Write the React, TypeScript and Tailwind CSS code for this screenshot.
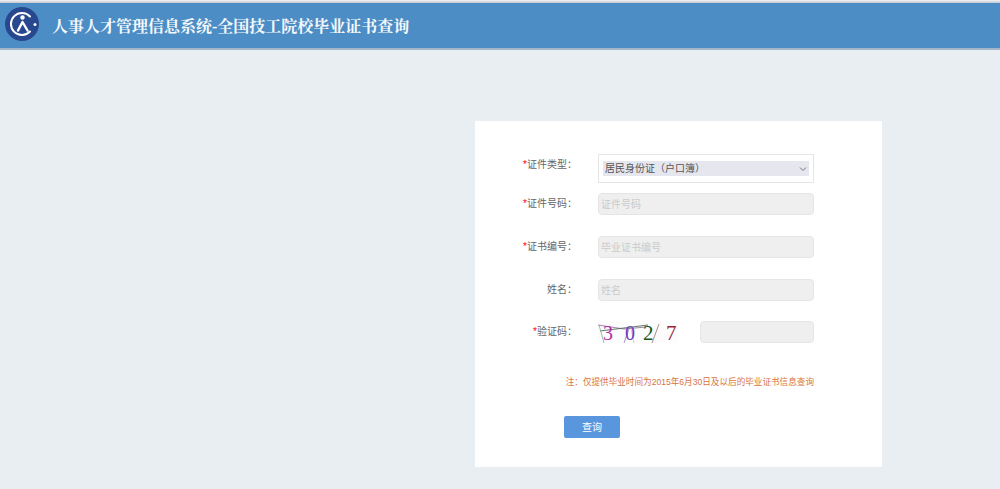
const fontCn = "font-['Liberation_Sans','Noto_Sans_CJK_SC',sans-serif]";

function Logo() {
  return (
    <svg width="34" height="34" viewBox="0 0 34 34" className="mt-[4px] shrink-0 self-start">
      <circle cx="17" cy="17" r="17" fill="#27488f" />
      <path d="M25 9.5A11 11 0 1 0 25 24.5" fill="none" stroke="#fff" strokeWidth="2" strokeLinecap="round" />
      <circle cx="17.5" cy="10.5" r="2.2" fill="#fff" />
      <path d="M17.5 15L13 23.5M17.5 15L22.5 23.5" fill="none" stroke="#fff" strokeWidth="2.4" strokeLinecap="round" />
      <circle cx="30" cy="17.5" r="1.5" fill="#fff" />
    </svg>
  );
}

function Captcha() {
  return (
    <svg width="80" height="22" viewBox="0 0 80 22" className="shrink-0 bg-[#fbfcfb]">
      <path d="M0 4L26 8L48 6" fill="none" stroke="#8a6a9a" strokeWidth="0.8" />
      <path d="M2 10L50 4" stroke="#4c6a55" strokeWidth="0.9" />
      <path d="M1 4L6 22" stroke="#7fb09a" strokeWidth="0.8" />
      <path d="M26 22L32 5" stroke="#9a78b5" strokeWidth="0.8" />
      <path d="M33 8L36 22" stroke="#d8c79a" strokeWidth="0.8" />
      <path d="M54 22L61 3" stroke="#a08080" strokeWidth="0.9" />
      <text x="5" y="19" fontFamily="Liberation Serif, serif" fontSize="20" fill="#b52ba8">3</text>
      <text x="27" y="19" fontFamily="Liberation Serif, serif" fontSize="20" fill="#6d3bc4">0</text>
      <text x="45" y="19" fontFamily="Liberation Serif, serif" fontSize="21" fill="#14571f">2</text>
      <text x="68" y="19" fontFamily="Liberation Serif, serif" fontSize="21" fill="#9c1f3d">7</text>
    </svg>
  );
}

function FieldLabel({ text, required, lifted }: { text: string; required?: boolean; lifted?: boolean }) {
  return (
    <label className={`w-[102px] shrink-0 text-right text-[10px] leading-[14px] text-[#666] ${lifted ? "mb-[7px]" : ""}`}>
      {required && <span className="text-[#f00]">*</span>}
      {text}：
    </label>
  );
}

function TextField({ placeholder, width = "w-[216px]" }: { placeholder?: string; width?: string }) {
  return (
    <input
      readOnly
      placeholder={placeholder}
      className={`${width} h-[22px] rounded-[4px] border border-[#e5e5e5] bg-[#efefef] px-[2px] text-[10px] outline-none placeholder:text-[#cbcbcb]`}
    />
  );
}

export default function App() {
  return (
    <div className={`${fontCn} h-[489px] w-[1000px] overflow-hidden bg-[#e9eef3]`}>
      <div className="h-[3px] bg-gradient-to-b from-[#f2f4f6] to-[#c3c8cd]" />
      <header className="flex h-[47px] items-center gap-[13px] border-b-2 border-[#a4b7ca] bg-[#4c8dc5] pl-[5px]">
        <Logo />
        <h1 className="mt-[2px] font-['Liberation_Serif','Noto_Serif_CJK_SC','Noto_Sans_CJK_SC',serif] text-[16px] font-bold text-[#f4f8fb]">
          人事人才管理信息系统-全国技工院校毕业证书查询
        </h1>
      </header>

      <main className="pl-[475px] pt-[71px]">
        <form className="flex h-[346px] w-[407px] flex-col bg-white pt-[33px]">
          <div className="flex items-center gap-[21px]">
            <FieldLabel text="证件类型" required lifted />
            <div className="flex h-[29px] w-[216px] items-center border border-[#e5e5e5] px-[4px]">
              <div className="flex h-[15px] w-full items-center justify-between bg-[#e6e6ee] px-[2px] text-[10px] text-[#555]">
                <span>居民身份证（户口簿）</span>
                <svg width="8" height="6" viewBox="0 0 8 6">
                  <path d="M1 1.5L4 4.5L7 1.5" fill="none" stroke="#777" strokeWidth="1" />
                </svg>
              </div>
            </div>
          </div>

          <div className="mt-[10px] flex items-center gap-[21px]">
            <FieldLabel text="证件号码" required />
            <TextField placeholder="证件号码" />
          </div>

          <div className="mt-[21px] flex items-center gap-[21px]">
            <FieldLabel text="证书编号" required />
            <TextField placeholder="毕业证书编号" />
          </div>

          <div className="mt-[21px] flex items-center gap-[21px]">
            <FieldLabel text="姓名" />
            <TextField placeholder="姓名" />
          </div>

          <div className="mt-[20px] flex items-center gap-[21px]">
            <FieldLabel text="验证码" required />
            <div className="flex w-[216px] items-center gap-[22px]">
              <Captcha />
              <TextField width="w-[114px]" />
            </div>
          </div>

          <p className="mt-[33px] pr-[68px] text-right text-[8.6px] leading-[12px] text-[#d9743f]">
            注：仅提供毕业时间为2015年6月30日及以后的毕业证书信息查询
          </p>

          <button
            type="button"
            className="ml-[89px] mt-[28px] h-[22px] w-[56px] rounded-[2px] bg-[#5a96de] text-[10px] text-white"
          >
            查询
          </button>
        </form>
      </main>
    </div>
  );
}
